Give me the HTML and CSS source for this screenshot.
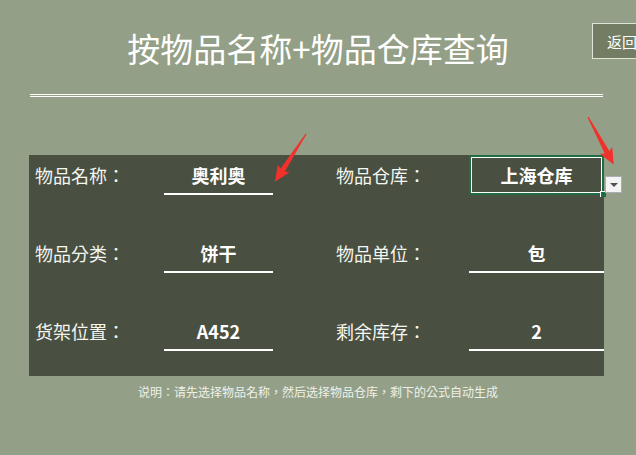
FILE: index.html
```html
<!DOCTYPE html>
<html lang="zh-CN">
<head>
    <meta charset="UTF-8">
    <title>按物品名称+物品仓库查询</title>
    <link rel="stylesheet" href="styles.css">
</head>
<body>
    <div class="header">
        <div></div>
        <h1 class="title">按物品名称+物品仓库查询</h1>
        <button class="back-btn">返回</button>
    </div>

    <div class="rule"></div>

    <div class="panel">
        <div class="label">物品名称：</div>
        <div class="value">奥利奥</div>
        <div></div>
        <div class="label">物品仓库：</div>
        <div class="value selected">
            上海仓库
            <span class="handle"></span>
            <span class="drop-btn"><span class="tri"></span></span>
        </div>

        <div class="label">物品分类：</div>
        <div class="value">饼干</div>
        <div></div>
        <div class="label">物品单位：</div>
        <div class="value">包</div>

        <div class="label">货架位置：</div>
        <div class="value">A452</div>
        <div></div>
        <div class="label">剩余库存：</div>
        <div class="value">2</div>
    </div>

    <p class="caption">说明：请先选择物品名称，然后选择物品仓库，剩下的公式自动生成</p>

    <!-- red pointer arrows drawn over the sheet -->
    <svg class="arrows" width="636" height="455" viewBox="0 0 636 455">
        <g transform="translate(306,134) rotate(122.9)">
            <polygon points="0,-0.6 43,-2.6 41,-7 57,0 41,7 43,2.6 0,0.6" fill="#f2302c"/>
        </g>
        <g transform="translate(588,117) rotate(61.6)">
            <polygon points="0,-0.6 40,-2.6 38,-7 54,0 38,7 40,2.6 0,0.6" fill="#f2302c"/>
        </g>
    </svg>
</body>
</html>
```

FILE: styles.css
```css
body {
    margin: 0;
    width: 636px;
    height: 455px;
    overflow: hidden;
    position: relative;
    background-color: #949f87;
    font-family: "Noto Sans CJK SC", "Noto Sans", sans-serif;
    color: #ffffff;
}
.header {
    display: grid;
    grid-template-columns: 1fr auto 1fr;
    align-items: start;
    padding-top: 23px;
}
.title {
    margin: 0;
    font-size: 33px;
    font-weight: normal;
    line-height: 50px;
    letter-spacing: 0;
}
.back-btn {
    justify-self: end;
    margin-right: -20px;
    width: 64px;
    height: 36px;
    padding: 0 0 0 14px;
    text-align: left;
    background-color: #727d63;
    border: 1px solid #dfe4d6;
    color: #ffffff;
    font-family: "Noto Sans CJK SC", sans-serif;
    font-size: 15px;
}
.rule {
    margin: 21px 0 0 30px;
    width: 573px;
    height: 1px;
    border-top: 1px solid #ffffff;
    border-bottom: 1px solid #ffffff;
}
.panel {
    margin: 58px 0 0 29px;
    width: 575px;
    padding-bottom: 25px;
    background-color: #4a5041;
    display: grid;
    grid-template-columns: 135px 109px 63px 133px 135px;
    grid-auto-rows: 40px;
    row-gap: 38px;
}
/* TC face without locl keeps the full-width colon centred, as in the sheet */
.label {
    padding-left: 6px;
    font-family: "Noto Sans CJK TC", "Noto Sans CJK SC", sans-serif;
    font-feature-settings: "locl" 0;
    font-size: 18px;
    line-height: 40px;
    color: #f4f6f0;
    white-space: nowrap;
}
.panel .label:nth-child(5n+4) {
    padding-left: 0;
}
.value {
    position: relative;
    box-sizing: border-box;
    border-bottom: 2px solid #ffffff;
    display: flex;
    align-items: center;
    justify-content: center;
    padding-top: 2px;
    font-size: 18px;
    font-weight: bold;
}
.value.selected {
    border: 2px solid #1f6e43;
    box-shadow: inset 0 0 0 1px #ffffff;
    padding-top: 0;
}
.handle {
    position: absolute;
    right: -4px;
    bottom: -4px;
    width: 5px;
    height: 5px;
    background-color: #1f6e43;
    border-left: 1px solid #ffffff;
    border-top: 1px solid #ffffff;
}
.drop-btn {
    position: absolute;
    left: 134px;
    top: 19px;
    width: 15px;
    height: 15px;
    background-color: #f4f4f4;
    border: 1px solid #a9aeb6;
    display: flex;
    align-items: center;
    justify-content: center;
}
.tri {
    width: 0;
    height: 0;
    border-left: 4px solid transparent;
    border-right: 4px solid transparent;
    border-top: 4px solid #505050;
}
.caption {
    margin: 6px 0 0;
    text-align: center;
    font-family: "Noto Sans CJK TC", "Noto Sans CJK SC", sans-serif;
    font-feature-settings: "locl" 0;
    font-size: 12px;
    line-height: 20px;
    color: #eef1e8;
}
.arrows {
    position: absolute;
    left: 0;
    top: 0;
    pointer-events: none;
}
```
